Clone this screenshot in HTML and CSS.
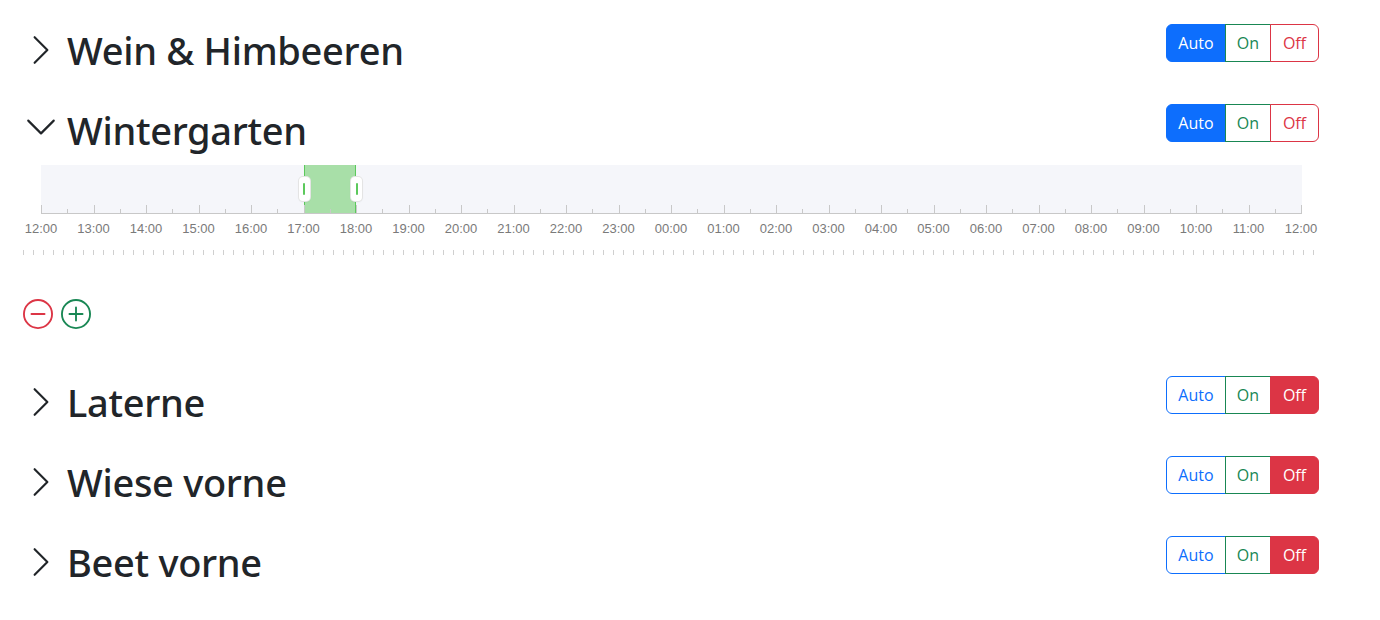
FILE: index.html
```html
<!DOCTYPE html>
<html lang="de">
<head>
<meta charset="utf-8">
<title>Zonen</title>
<link rel="stylesheet" href="styles.css">
</head>
<body>
<main class="zones">
  <section class="zone">
    <div class="zone-head">
      <h2 class="zone-title"><svg class="chev chev-right" viewBox="0 0 16 16"><path fill-rule="evenodd" d="M4.646 1.646a.5.5 0 0 1 .708 0l6 6a.5.5 0 0 1 0 .708l-6 6a.5.5 0 0 1-.708-.708L10.293 8 4.646 2.354a.5.5 0 0 1 0-.708z"/></svg><span>Wein &amp; Himbeeren</span></h2>
      <div class="btn-group"><button class="btn btn-auto active">Auto</button><button class="btn btn-on">On</button><button class="btn btn-off">Off</button></div>
    </div>
  </section>

  <section class="zone">
    <div class="zone-head">
      <h2 class="zone-title"><svg class="chev chev-down" viewBox="0 0 16 16"><path fill-rule="evenodd" d="M1.646 4.646a.5.5 0 0 1 .708 0L8 10.293l5.646-5.647a.5.5 0 0 1 .708.708l-6 6a.5.5 0 0 1-.708 0l-6-6a.5.5 0 0 1 0-.708z"/></svg><span>Wintergarten</span></h2>
      <div class="btn-group"><button class="btn btn-auto active">Auto</button><button class="btn btn-on">On</button><button class="btn btn-off">Off</button></div>
    </div>
    <div class="timeline">
      <div class="track">
        <div class="range" style="left:20.833%;width:4.167%"></div>
        <div class="handle" style="left:20.833%"></div>
        <div class="handle" style="left:25%"></div>
        <div class="ticks">
          <span class="tick major"></span><span class="tick"></span><span class="tick major"></span><span class="tick"></span><span class="tick major"></span><span class="tick"></span><span class="tick major"></span><span class="tick"></span><span class="tick major"></span><span class="tick"></span><span class="tick major"></span><span class="tick"></span><span class="tick major"></span><span class="tick"></span><span class="tick major"></span><span class="tick"></span><span class="tick major"></span><span class="tick"></span><span class="tick major"></span><span class="tick"></span><span class="tick major"></span><span class="tick"></span><span class="tick major"></span><span class="tick"></span><span class="tick major"></span><span class="tick"></span><span class="tick major"></span><span class="tick"></span><span class="tick major"></span><span class="tick"></span><span class="tick major"></span><span class="tick"></span><span class="tick major"></span><span class="tick"></span><span class="tick major"></span><span class="tick"></span><span class="tick major"></span><span class="tick"></span><span class="tick major"></span><span class="tick"></span><span class="tick major"></span><span class="tick"></span><span class="tick major"></span><span class="tick"></span><span class="tick major"></span><span class="tick"></span><span class="tick major"></span><span class="tick"></span><span class="tick major end"></span>
        </div>
      </div>
      <div class="labels">
        <span>12:00</span><span>13:00</span><span>14:00</span><span>15:00</span><span>16:00</span><span>17:00</span><span>18:00</span><span>19:00</span><span>20:00</span><span>21:00</span><span>22:00</span><span>23:00</span><span>00:00</span><span>01:00</span><span>02:00</span><span>03:00</span><span>04:00</span><span>05:00</span><span>06:00</span><span>07:00</span><span>08:00</span><span>09:00</span><span>10:00</span><span>11:00</span><span>12:00</span>
      </div>
      <div class="dashes"></div>
      <div class="actions">
        <button class="icon-btn remove" aria-label="Entfernen"><svg viewBox="0 0 16 16"><path d="M8 15A7 7 0 1 1 8 1a7 7 0 0 1 0 14zm0 1A8 8 0 1 0 8 0a8 8 0 0 0 0 16z"/><path d="M4 8a.5.5 0 0 1 .5-.5h7a.5.5 0 0 1 0 1h-7A.5.5 0 0 1 4 8z"/></svg></button>
        <button class="icon-btn add" aria-label="Hinzufügen"><svg viewBox="0 0 16 16"><path d="M8 15A7 7 0 1 1 8 1a7 7 0 0 1 0 14zm0 1A8 8 0 1 0 8 0a8 8 0 0 0 0 16z"/><path d="M8 4a.5.5 0 0 1 .5.5v3h3a.5.5 0 0 1 0 1h-3v3a.5.5 0 0 1-1 0v-3h-3a.5.5 0 0 1 0-1h3v-3A.5.5 0 0 1 8 4z"/></svg></button>
      </div>
    </div>
  </section>

  <section class="zone">
    <div class="zone-head">
      <h2 class="zone-title"><svg class="chev chev-right" viewBox="0 0 16 16"><path fill-rule="evenodd" d="M4.646 1.646a.5.5 0 0 1 .708 0l6 6a.5.5 0 0 1 0 .708l-6 6a.5.5 0 0 1-.708-.708L10.293 8 4.646 2.354a.5.5 0 0 1 0-.708z"/></svg><span>Laterne</span></h2>
      <div class="btn-group"><button class="btn btn-auto">Auto</button><button class="btn btn-on">On</button><button class="btn btn-off active">Off</button></div>
    </div>
  </section>

  <section class="zone">
    <div class="zone-head">
      <h2 class="zone-title"><svg class="chev chev-right" viewBox="0 0 16 16"><path fill-rule="evenodd" d="M4.646 1.646a.5.5 0 0 1 .708 0l6 6a.5.5 0 0 1 0 .708l-6 6a.5.5 0 0 1-.708-.708L10.293 8 4.646 2.354a.5.5 0 0 1 0-.708z"/></svg><span>Wiese vorne</span></h2>
      <div class="btn-group"><button class="btn btn-auto">Auto</button><button class="btn btn-on">On</button><button class="btn btn-off active">Off</button></div>
    </div>
  </section>

  <section class="zone">
    <div class="zone-head">
      <h2 class="zone-title"><svg class="chev chev-right" viewBox="0 0 16 16"><path fill-rule="evenodd" d="M4.646 1.646a.5.5 0 0 1 .708 0l6 6a.5.5 0 0 1 0 .708l-6 6a.5.5 0 0 1-.708-.708L10.293 8 4.646 2.354a.5.5 0 0 1 0-.708z"/></svg><span>Beet vorne</span></h2>
      <div class="btn-group"><button class="btn btn-auto">Auto</button><button class="btn btn-on">On</button><button class="btn btn-off active">Off</button></div>
    </div>
  </section>
</main>
</body>
</html>
```

FILE: styles.css
```css
* { box-sizing: border-box; }

body {
  margin: 0;
  background: #fff;
  color: #212529;
  font-family: "Open Sans", "Noto Sans", sans-serif;
}

.zone-head {
  height: 80px;
  padding: 24px 61px 0 24px;
  display: flex;
  justify-content: space-between;
  align-items: flex-start;
}

.zone-title {
  margin: 0;
  padding-top: 3px;
  display: flex;
  align-items: flex-start;
  font-family: "Noto Sans", "Open Sans", sans-serif;
  font-size: 38px;
  line-height: 47px;
  font-weight: 500;
  letter-spacing: -0.3px;
  color: #212529;
}

.chev {
  width: 34px;
  height: 34px;
  margin-right: 9px;
  fill: #212529;
  flex: none;
}
.chev-right { margin-top: 6px; }
.chev-down { margin-top: 3px; }

.btn-group { display: flex; }

.btn {
  font-family: inherit;
  font-size: 16px;
  line-height: 24px;
  padding: 6px 0;
  height: 38px;
  text-align: center;
  background: #fff;
  border: 1px solid;
  border-radius: 0;
  cursor: pointer;
}
.btn + .btn { margin-left: -1px; }
.btn-auto {
  width: 60px;
  color: #0d6efd;
  border-color: #0d6efd;
  border-radius: 6px 0 0 6px;
}
.btn-on {
  width: 46px;
  color: #198754;
  border-color: #198754;
}
.btn-off {
  width: 49px;
  color: #dc3545;
  border-color: #dc3545;
  border-radius: 0 6px 6px 0;
}
.btn-auto.active { background: #0d6efd; color: #fff; }
.btn-off.active { background: #dc3545; color: #fff; }

/* timeline */
.timeline {
  height: 192px;
  padding-top: 5px;
}

.track {
  position: relative;
  margin-left: 41px;
  width: 1261px;
  height: 49px;
  background: #f5f6fa;
  display: flex;
  align-items: flex-end;
}

.range {
  position: absolute;
  top: 0;
  bottom: 1px;
  background: #a8dfa8;
  border-left: 1px solid #5cc95c;
  border-right: 1px solid #5cc95c;
}

.handle {
  position: absolute;
  top: 12px;
  width: 11px;
  height: 24px;
  margin-left: -5px;
  background: #fff;
  border-radius: 4px;
  box-shadow: 0 0 0 1px #e4e4e4, 0 1px 2px rgba(0,0,0,.08);
  display: flex;
  align-items: center;
  justify-content: center;
  z-index: 2;
}
.handle::after {
  content: "";
  width: 2px;
  height: 12px;
  background: #5cc95c;
  border-radius: 1px;
}

.ticks {
  position: relative;
  z-index: 1;
  width: 100%;
  height: 9px;
  display: flex;
  align-items: flex-end;
  border-bottom: 1px solid #c8c8c8;
}
.tick {
  flex: 1;
  height: 4px;
  border-left: 1px solid #c8c8c8;
}
.tick.major { height: 8px; }
.tick.end { flex: none; width: 1px; }

.labels {
  display: flex;
  margin-left: 14.75px;
  margin-top: 7px;
  font-family: "Liberation Sans", Arial, sans-serif;
  font-size: 13px;
  line-height: 15px;
  color: #7a7a7a;
}
.labels span {
  width: 52.5px;
  flex: none;
  text-align: center;
}

.dashes {
  margin: 14px 0 0 23px;
  width: 1291px;
  height: 5px;
  background: repeating-linear-gradient(to right, #cfcfcf 0, #cfcfcf 1px, transparent 1px, transparent 10px);
}

.actions {
  display: flex;
  gap: 8px;
  margin: 44px 0 0 23px;
}
.icon-btn {
  width: 30px;
  height: 30px;
  padding: 0;
  border: 0;
  background: none;
  cursor: pointer;
}
.icon-btn svg { width: 30px; height: 30px; display: block; }
.icon-btn.remove svg { fill: #dc3545; }
.icon-btn.add svg { fill: #198754; }
```
